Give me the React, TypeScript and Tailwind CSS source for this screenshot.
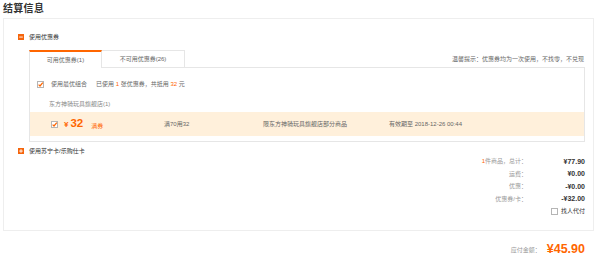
import React from "react";

const Check = ({ checked }: { checked: boolean }) => (
  <svg width="7" height="7" viewBox="0 0 7 7" className="shrink-0">
    <rect x="0.5" y="0.5" width="6" height="6" fill="#fff" stroke="#b5b5b5" />
    {checked && <path d="M1.6 3.6 L3 5 L5.8 1.6" fill="none" stroke="#f60" strokeWidth="1.2" />}
  </svg>
);

const SectionIcon = ({ plus }: { plus?: boolean }) => (
  <svg width="6" height="6" viewBox="0 0 6 6" className="shrink-0">
    <rect width="6" height="6" fill="#f5650c" />
    <rect x="1.2" y="2.6" width="3.6" height="0.9" fill="#fff" />
    {plus && <rect x="2.55" y="1.2" width="0.9" height="3.6" fill="#fff" />}
  </svg>
);

export default function App() {
  return (
    <div className="w-[600px] h-[255px] bg-white overflow-hidden font-['Liberation_Sans','Noto_Sans_CJK_SC',sans-serif] text-[6px] leading-none text-[#666]">
      <div className="pl-[3px] h-[18px] flex items-center">
        <span className="text-[10px] font-semibold text-[#333] tracking-[0.3px]">结算信息</span>
      </div>
      <div className="ml-[3px] w-[591px] h-[213px] border border-[#eeeeee] flex flex-col">
        {/* coupon header */}
        <div className="mt-[12px] h-[12px] pl-[14px] flex items-center gap-[5px]">
          <SectionIcon />
          <span className="text-[#333]">使用优惠券</span>
        </div>
        {/* tabs */}
        <div className="mt-[7px] pl-[25px] pr-[8px]">
          <div className="flex items-end h-[17px]">
            <div className="relative z-10 -mb-px w-[73px] h-[18px] bg-white border-t-2 border-t-[#f60] border-x border-x-[#e6e6e6] flex items-center justify-center">
              <span>可用优惠券(1)</span>
            </div>
            <div className="w-[83px] h-[17px] border-t border-r border-[#e6e6e6] flex items-center justify-center">
              <span>不可用优惠券(26)</span>
            </div>
            <div className="flex-1 h-[17px] flex items-center justify-end pr-px">
              <span>温馨提示：优惠券均为一次使用，不找零，不兑现</span>
            </div>
          </div>
          <div className="border border-[#e6e6e6] pb-[5px]">
            <div className="mt-[10px] h-[12px] pl-[7px] flex items-center">
              <Check checked />
              <span className="ml-[7px]">使用最优组合</span>
              <span className="ml-[9px]">
                已使用 <span className="text-[#f60]">1</span> 张优惠券，共抵用 <span className="text-[#f60]">32</span> 元
              </span>
            </div>
            <div className="mt-[8px] h-[12px] pl-[19px] flex items-center text-[#888]">东方神骑玩具旗舰店(1)</div>
            <div className="mt-[2px] h-[24px] bg-[#fff0db] flex items-center">
              <div className="w-[134px] pl-[21px] flex items-center">
                <Check checked />
                <span className="ml-[6px] text-[8px] text-[#f60] font-bold self-center mt-[1px]">¥</span>
                <span className="ml-[2px] text-[11.5px] text-[#f60] font-bold">32</span>
                <span className="ml-[8px] text-[#f60] mt-[4px]">满券</span>
              </div>
              <div className="w-[99px]">满70用32</div>
              <div className="w-[126px]">限东方神骑玩具旗舰店部分商品</div>
              <div>有效期至 2018-12-26 00:44</div>
            </div>
          </div>
        </div>
        {/* card header */}
        <div className="mt-[4px] h-[10px] pl-[14px] flex items-center gap-[5px]">
          <SectionIcon plus />
          <span className="text-[#333]">使用苏宁卡/乐购仕卡</span>
        </div>
        {/* summary */}
        <div className="-mt-px pr-[8px] flex flex-col items-end">
          {[
            [<><span className="text-[#f60]">1</span>件商品，总计：</>, "¥77.90"],
            ["运费：", "¥0.00"],
            ["优惠：", "-¥0.00"],
            ["优惠券/卡：", "-¥32.00"],
          ].map(([l, v], i) => (
            <div key={i} className="h-[12.5px] flex items-center">
              <span className="text-[#999] text-right">{l}</span>
              <span className="w-[58px] text-right font-bold text-[7px] text-[#333]">{v}</span>
            </div>
          ))}
          <div className="h-[12.5px] flex items-center">
            <Check checked={false} />
            <span className="ml-[3px] text-[#333]">找人代付</span>
          </div>
        </div>
      </div>
      <div className="mt-[11px] h-[14px] pr-[15px] flex items-center justify-end">
        <span className="text-[#999] mt-[2px]">应付金额：</span>
        <span className="ml-[6px] text-[12.5px] font-bold text-[#f60]">¥45.90</span>
      </div>
    </div>
  );
}
